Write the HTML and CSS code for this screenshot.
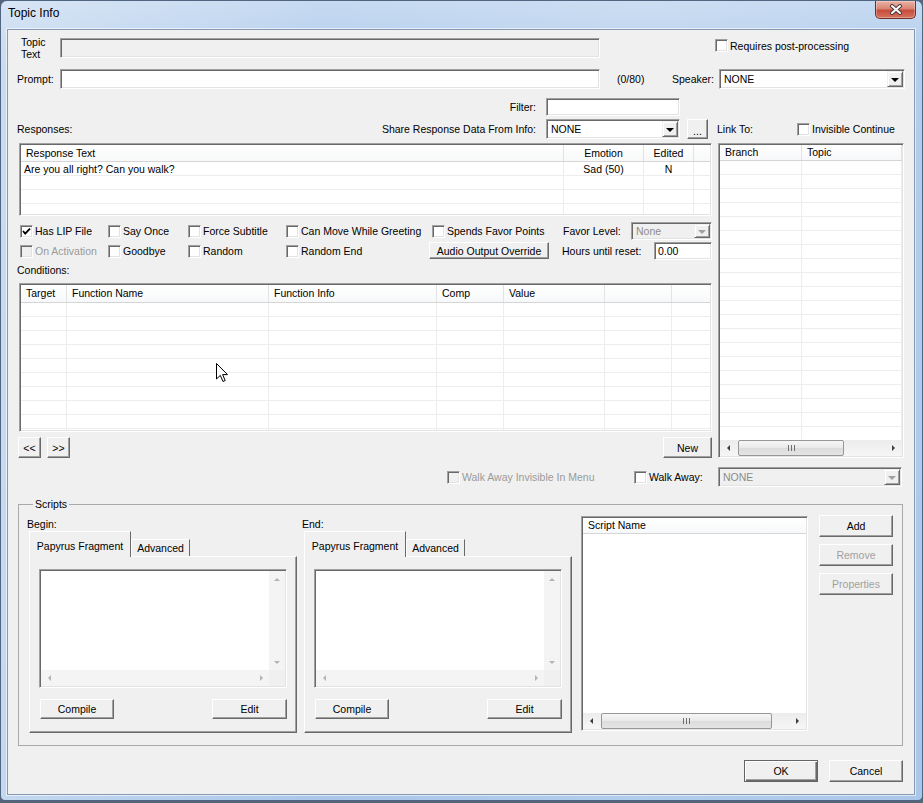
FILE: index.html
```html
<!DOCTYPE html>
<html lang="en">
<head>
  <meta charset="UTF-8" />
  <meta name="viewport" content="width=device-width, initial-scale=1" />
  <title>Topic Info</title>
  <link rel="stylesheet" href="styles.css">
</head>
<body>
  <div class="window">
    <div class="titlebar">
      <span class="title">Topic Info</span>
      <div class="close-btn">
        <svg width="14" height="11" viewBox="0 0 14 11">
          <path d="M3 2 L11 9 M11 2 L3 9" stroke="#4a3a3a" stroke-width="4" stroke-linecap="round"/>
          <path d="M3 2 L11 9 M11 2 L3 9" stroke="#fff" stroke-width="2" stroke-linecap="round"/>
        </svg>
      </div>
    </div>

    <div class="client">
      <!-- Topic text / prompt -->
      <div class="row row-topic">
        <span class="lbl-topic">Topic<br>Text</span>
        <div class="field sunken field-wide disabled"></div>
        <label class="check check-post"><span class="box sunken"></span><span>Requires post-processing</span></label>
      </div>

      <div class="row row-prompt">
        <span class="lbl-prompt">Prompt:</span>
        <div class="field sunken field-wide"></div>
        <span class="counter">(0/80)</span>
        <span class="lbl-speaker">Speaker:</span>
        <div class="combo sunken combo-speaker"><span class="combo-text">NONE</span><span class="drop"></span></div>
      </div>

      <div class="row row-filter">
        <span class="lbl-filter">Filter:</span>
        <div class="field sunken field-filter"></div>
      </div>

      <div class="row row-share">
        <div class="share-lbls"><span>Responses:</span><span>Share Response Data From Info:</span></div>
        <div class="combo sunken combo-share"><span class="combo-text">NONE</span><span class="drop"></span></div>
        <div class="btn btn-more">...</div>
        <span class="lbl-link">Link To:</span>
        <label class="check"><span class="box sunken"></span><span>Invisible Continue</span></label>
      </div>

      <!-- Responses, options, conditions + link list -->
      <div class="main">
        <div class="left-col">
          <div class="lv sunken lv-resp">
            <div class="lv-head">
              <span>Response Text</span><span class="c">Emotion</span><span class="c">Edited</span><span></span>
            </div>
            <div class="lv-body">
              <div class="lv-col"><div class="cell">Are you all right? Can you walk?</div></div>
              <div class="lv-col"><div class="cell c">Sad (50)</div></div>
              <div class="lv-col"><div class="cell c">N</div></div>
              <div class="lv-col"></div>
            </div>
          </div>

          <div class="opts opts-1">
            <label class="check opt-a"><span class="box sunken"><svg width="9" height="9" viewBox="0 0 9 9"><path d="M1 4 L3.2 6.6 L8 1.6" fill="none" stroke="#000" stroke-width="1.8"/></svg></span><span>Has LIP File</span></label>
            <label class="check opt-b"><span class="box sunken"></span><span>Say Once</span></label>
            <label class="check opt-c"><span class="box sunken"></span><span>Force Subtitle</span></label>
            <label class="check opt-d"><span class="box sunken"></span><span>Can Move While Greeting</span></label>
            <label class="check opt-e"><span class="box sunken"></span><span>Spends Favor Points</span></label>
            <span class="lbl-favor">Favor Level:</span>
            <div class="combo sunken combo-favor disabled"><span class="combo-text">None</span><span class="drop"></span></div>
          </div>

          <div class="opts opts-2">
            <label class="check opt-a dis"><span class="box sunken"></span><span class="clip">On Activation</span></label>
            <label class="check opt-b"><span class="box sunken"></span><span>Goodbye</span></label>
            <label class="check opt-c"><span class="box sunken"></span><span>Random</span></label>
            <label class="check opt-d2"><span class="box sunken"></span><span>Random End</span></label>
            <div class="btn btn-audio">Audio Output Override</div>
            <span class="lbl-hours">Hours until reset:</span>
            <div class="field sunken field-hours">0.00</div>
          </div>

          <div class="lbl-cond">Conditions:</div>

          <div class="lv sunken lv-cond">
            <div class="lv-head">
              <span>Target</span><span>Function Name</span><span>Function Info</span><span>Comp</span><span>Value</span><span></span><span></span>
            </div>
            <div class="lv-body">
              <div class="lv-col"></div><div class="lv-col"></div><div class="lv-col"></div>
              <div class="lv-col"></div><div class="lv-col"></div><div class="lv-col"></div>
              <div class="lv-col"></div>
            </div>
          </div>

          <div class="nav-row">
            <div class="btn btn-nav btn-prev">&lt;&lt;</div>
            <div class="btn btn-nav">&gt;&gt;</div>
            <div class="btn btn-new">New</div>
          </div>
        </div>

        <div class="lv sunken lv-link">
          <div class="lv-head">
            <span>Branch</span><span>Topic</span><span></span>
          </div>
          <div class="lv-body">
            <div class="lv-col"></div><div class="lv-col"></div><div class="lv-col"></div>
          </div>
          <div class="hscroll">
            <span class="sb-btn"><i class="arr-l"></i></span>
            <span class="thumb thumb-link"><i class="grip"></i></span>
            <span class="sb-track"></span>
            <span class="sb-btn"><i class="arr-r"></i></span>
          </div>
        </div>
      </div>

      <!-- Walk away -->
      <div class="row row-walk">
        <label class="check walk-inv dis"><span class="box sunken"></span><span>Walk Away Invisible In Menu</span></label>
        <label class="check walk-chk"><span class="box sunken"></span><span>Walk Away:</span></label>
        <div class="combo sunken combo-walk disabled"><span class="combo-text">NONE</span><span class="drop"></span></div>
      </div>

      <!-- Scripts -->
      <fieldset class="group">
        <legend>Scripts</legend>

        <div class="script-col">
          <div class="col-lbl">Begin:</div>
          <div class="tabs">
            <div class="tab active">Papyrus Fragment</div>
            <div class="tab">Advanced</div>
          </div>
          <div class="tab-panel">
            <div class="code-edit sunken">
              <div class="code-text"></div>
              <div class="vscroll"><span class="sb-sq"><i class="arr-u"></i></span><span class="sb-sq"><i class="arr-d"></i></span></div>
              <div class="hscroll-dis"><span class="sb-sq"><i class="arr-l dim"></i></span><span class="sb-sq"><i class="arr-r dim"></i></span></div>
              <div class="sb-corner"></div>
            </div>
            <div class="panel-btns">
              <div class="btn btn-compile">Compile</div>
              <div class="btn btn-edit">Edit</div>
            </div>
          </div>
        </div>

        <div class="script-col">
          <div class="col-lbl">End:</div>
          <div class="tabs">
            <div class="tab active">Papyrus Fragment</div>
            <div class="tab">Advanced</div>
          </div>
          <div class="tab-panel">
            <div class="code-edit sunken">
              <div class="code-text"></div>
              <div class="vscroll"><span class="sb-sq"><i class="arr-u"></i></span><span class="sb-sq"><i class="arr-d"></i></span></div>
              <div class="hscroll-dis"><span class="sb-sq"><i class="arr-l dim"></i></span><span class="sb-sq"><i class="arr-r dim"></i></span></div>
              <div class="sb-corner"></div>
            </div>
            <div class="panel-btns">
              <div class="btn btn-compile">Compile</div>
              <div class="btn btn-edit">Edit</div>
            </div>
          </div>
        </div>

        <div class="lv sunken lv-script">
          <div class="lv-head"><span>Script Name</span></div>
          <div class="lv-body"></div>
          <div class="hscroll">
            <span class="sb-btn"><i class="arr-l"></i></span>
            <span class="thumb thumb-script"><i class="grip"></i></span>
            <span class="sb-track"></span>
            <span class="sb-btn"><i class="arr-r"></i></span>
          </div>
        </div>

        <div class="side-btns">
          <div class="btn btn-side">Add</div>
          <div class="btn btn-side dis">Remove</div>
          <div class="btn btn-side dis">Properties</div>
        </div>
      </fieldset>

      <div class="footer">
        <div class="btn btn-dlg default">OK</div>
        <div class="btn btn-dlg">Cancel</div>
      </div>
    </div>

    <svg class="cursor" width="12" height="19" viewBox="0 0 12 19">
      <path d="M0.5 0.5 V16 L4.3 12.4 L7 18.5 L9.2 17.5 L6.6 11.6 H11.5 Z" fill="#fff" stroke="#000" stroke-width="1"/>
    </svg>
  </div>
</body>
</html>
```

FILE: styles.css
```css
* {
  box-sizing: border-box;
}

body {
  margin: 0;
  background: #56657a;
  font-family: "Liberation Sans", Arial, sans-serif;
  font-size: 10.5px;
  color: #000;
}

/* window frame */

.window {
  position: relative;
  width: 923px;
  height: 801px;
  border: 1px solid #506580;
  border-radius: 7px 7px 5px 5px;
  background:
    linear-gradient(to right, rgba(255, 255, 255, 0.3), rgba(255, 255, 255, 0) 35%, rgba(255, 255, 255, 0.1) 70%, rgba(255, 255, 255, 0)),
    linear-gradient(#c6daf1, #b4cdec 60px, #aac7e9);
  overflow: hidden;
}

.titlebar {
  height: 28px;
  display: flex;
  justify-content: space-between;
  align-items: flex-start;
  padding-left: 7px;
}

.title {
  font-size: 12px;
  line-height: 24px;
}

.close-btn {
  width: 41px;
  height: 18px;
  margin-right: 6px;
  border: 1px solid #6e3028;
  border-top: none;
  border-radius: 0 0 5px 5px;
  background: linear-gradient(#eab2a4, #da8574 45%, #c64c3b 55%, #d8735f);
  box-shadow: inset 0 0 0 1px rgba(255, 255, 255, 0.3);
  display: flex;
  align-items: center;
  justify-content: center;
}

.client {
  margin: 0 7px 0 6px;
  height: 766px;
  background: #f0f0f0;
  border: 1px solid #8599b2;
  box-shadow: 0 0 0 1px rgba(255, 255, 255, 0.6);
}

.cursor {
  position: absolute;
  left: 215px;
  top: 362px;
}

/* common controls */

.sunken {
  border: 1px solid;
  border-color: #a0a0a0 #fff #fff #a0a0a0;
  box-shadow: inset 1px 1px 0 #696969, inset -1px -1px 0 #e3e3e3;
  padding: 1px;
}

.field {
  background: #fff;
  line-height: 14px;
  padding-left: 4px;
}

.field.disabled {
  background: #f0f0f0;
}

.btn {
  background: #f0f0f0;
  border: 1px solid;
  border-color: #fff #696969 #696969 #fff;
  box-shadow: inset -1px -1px 0 #a0a0a0;
  display: flex;
  align-items: center;
  justify-content: center;
  white-space: nowrap;
}

.btn.dis {
  color: #a0a0a0;
}

.btn.default {
  border-color: #646464;
  box-shadow: inset 1px 1px 0 #fff, inset -1px -1px 0 #696969, inset -2px -2px 0 #a0a0a0;
}

.combo {
  display: flex;
  background: #fff;
}

.combo-text {
  flex: 1;
  padding-left: 3px;
  display: flex;
  align-items: center;
}

.combo.disabled {
  background: #f0f0f0;
  color: #8c8c8c;
}

.drop {
  width: 16px;
  background: #f0f0f0;
  border: 1px solid;
  border-color: #f0f0f0 #696969 #696969 #f0f0f0;
  box-shadow: inset 1px 1px 0 #fff, inset -1px -1px 0 #a0a0a0;
  display: flex;
  align-items: center;
  justify-content: center;
}

.drop::after {
  content: "";
  border-left: 4px solid transparent;
  border-right: 4px solid transparent;
  border-top: 4px solid #000;
  margin-top: 1px;
}

.combo.disabled .drop::after {
  border-top-color: #a0a0a0;
}

.check {
  display: flex;
  align-items: center;
  white-space: nowrap;
}

.box {
  width: 13px;
  height: 13px;
  flex: none;
  margin-right: 2px;
  background: #fff;
}

.box svg {
  display: block;
}

.check.dis {
  color: #9a9a9a;
}

.check.dis .box {
  background: #f0f0f0;
}

/* top rows */

.row {
  display: flex;
  align-items: center;
}

.row > * {
  flex: none;
}

.row-topic {
  margin-top: 8px;
  height: 20px;
}

.lbl-topic {
  width: 52px;
  padding-left: 13px;
  line-height: 12px;
}

.field-wide {
  width: 540px;
  height: 20px;
}

.check-post {
  align-self: flex-start;
  margin: 1px 0 0 115px;
}

.row-prompt {
  margin-top: 11px;
  height: 20px;
}

.lbl-prompt {
  width: 52px;
  padding-left: 9px;
}

.counter {
  width: 55px;
  margin-left: 17px;
}

.lbl-speaker {
  width: 47px;
}

.combo-speaker {
  width: 186px;
  height: 20px;
}

.row-filter {
  margin-top: 9px;
  height: 18px;
}

.lbl-filter {
  width: 528px;
  text-align: right;
}

.field-filter {
  width: 134px;
  height: 18px;
  margin-left: 10px;
}

.row-share {
  margin-top: 3px;
  height: 20px;
}

.share-lbls {
  width: 528px;
  padding-left: 9px;
  display: flex;
  justify-content: space-between;
}

.combo-share {
  width: 134px;
  height: 20px;
  margin-left: 10px;
}

.btn-more {
  width: 21px;
  height: 20px;
  margin-left: 7px;
  padding-top: 3px;
}

.lbl-link {
  width: 80px;
  margin-left: 9px;
}

/* main area */

.main {
  display: flex;
  gap: 6px;
  height: 315px;
  margin-top: 4px;
  padding-left: 11px;
}

.left-col {
  width: 693px;
  display: flex;
  flex-direction: column;
}

.lv {
  display: flex;
  flex-direction: column;
  background: #fff;
  overflow: hidden;
  flex: none;
}

.lv-head {
  display: grid;
  grid-template-columns: var(--cols);
  height: 17px;
  line-height: 16px;
  background: linear-gradient(#fff, #f7f8f9);
  border-bottom: 1px solid #d5d5d5;
  flex: none;
}

.lv-head span {
  padding: 0 5px;
  border-right: 1px solid #e3e3e3;
  white-space: nowrap;
  overflow: hidden;
}

.lv-head span:last-child {
  border-right: none;
}

.lv-body {
  flex: 1;
  display: grid;
  grid-template-columns: var(--cols);
  background: repeating-linear-gradient(#fff 0 13px, #ededed 13px 14px);
}

.lv-col {
  border-right: 1px solid #ededed;
}

.lv-col:last-child {
  border-right: none;
}

.cell {
  height: 14px;
  line-height: 14px;
  padding: 0 3px;
  white-space: nowrap;
  overflow: hidden;
}

.c {
  text-align: center;
}

.lv-resp {
  --cols: 543px 80px 50px 1fr;
  height: 73px;
}

.lv-cond {
  --cols: 46px 202px 168px 67px 101px 67px 1fr;
  height: 149px;
  margin-top: 6px;
}

.lv-cond .lv-head {
  height: 18px;
  line-height: 17px;
}

.lv-link {
  --cols: 82px 100px 1fr;
  width: 186px;
  height: 315px;
}

.lv-link .lv-head {
  height: 16px;
  line-height: 15px;
}

.opts {
  display: flex;
  align-items: center;
  height: 18px;
}

.opts > * {
  flex: none;
}

.opts-1 {
  margin-top: 6px;
}

.opts-2 {
  margin-top: 2px;
}

.opt-a {
  width: 88px;
  margin-left: 1px;
}

.opt-b {
  width: 80px;
}

.opt-c {
  width: 98px;
}

.opt-d {
  width: 146px;
}

.opt-d2 {
  width: 143px;
}

.opt-e {
  width: 131px;
}

.clip {
  width: 63px;
  overflow: hidden;
}

.lbl-favor {
  width: 68px;
}

.combo-favor {
  width: 81px;
  height: 18px;
}

.btn-audio {
  width: 120px;
  height: 17px;
  align-self: flex-start;
}

.lbl-hours {
  width: 92px;
  margin-left: 13px;
}

.field-hours {
  width: 58px;
  height: 18px;
  padding-left: 3px;
}

.lbl-cond {
  margin: 3px 0 0 -2px;
  line-height: 14px;
}

.nav-row {
  display: flex;
  height: 24px;
  margin-top: 5px;
}

.btn-nav {
  width: 23px;
  margin-left: 6px;
}

.btn-prev {
  margin-left: -1px;
}

.btn-new {
  width: 49px;
  margin-left: auto;
}

/* scrollbars */

.hscroll {
  display: flex;
  height: 16px;
  flex: none;
  background: linear-gradient(#ececec, #f6f6f6);
}

.sb-btn {
  width: 17px;
  display: flex;
  align-items: center;
  justify-content: center;
  flex: none;
}

.sb-track {
  flex: 1;
}

.thumb {
  margin-left: 1px;
  border: 1px solid #979797;
  border-radius: 2px;
  background: linear-gradient(#f6f6f6, #e9e9e9 50%, #dcdcdc 51%, #e4e4e4);
  display: flex;
  align-items: center;
  justify-content: center;
  flex: none;
}

.thumb-link {
  width: 106px;
}

.thumb-script {
  width: 171px;
}

.grip {
  width: 7px;
  height: 6px;
  background: repeating-linear-gradient(to right, #6f6f6f 0 1px, transparent 1px 3px);
}

.arr-l,
.arr-r,
.arr-u,
.arr-d {
  width: 0;
  height: 0;
}

.arr-l {
  border-top: 3px solid transparent;
  border-bottom: 3px solid transparent;
  border-right: 3px solid #3c3c3c;
}

.arr-r {
  border-top: 3px solid transparent;
  border-bottom: 3px solid transparent;
  border-left: 3px solid #3c3c3c;
}

.arr-u {
  border-left: 3px solid transparent;
  border-right: 3px solid transparent;
  border-bottom: 3px solid #b4b4b4;
}

.arr-d {
  border-left: 3px solid transparent;
  border-right: 3px solid transparent;
  border-top: 3px solid #b4b4b4;
}

.arr-l.dim {
  border-right-color: #b4b4b4;
}

.arr-r.dim {
  border-left-color: #b4b4b4;
}

/* walk away row */

.row-walk {
  margin-top: 9px;
  height: 20px;
  justify-content: flex-end;
  padding-right: 12px;
}

.walk-inv {
  width: 187px;
}

.walk-chk {
  width: 84px;
}

.combo-walk {
  width: 184px;
  height: 20px;
}

/* scripts group */

.group {
  display: flex;
  align-items: flex-start;
  height: 248px;
  margin: 11px 11px 0 10px;
  padding: 4px 9px 0 8px;
  border: 1px solid #a9a9a9;
  min-width: 0;
}

.group legend {
  margin-left: 6px;
  padding: 0 2px;
  line-height: 13px;
}

.script-col {
  width: 270px;
  display: flex;
  flex-direction: column;
  flex: none;
}

.script-col + .script-col {
  margin-left: 5px;
}

.col-lbl {
  margin-top: 3px;
  line-height: 13px;
}

.tabs {
  display: flex;
  align-items: flex-end;
  height: 26px;
  margin: 0 0 -1px 2px;
  z-index: 1;
}

.tab {
  height: 17px;
  width: 59px;
  margin-bottom: 1px;
  padding-top: 2px;
  line-height: 13px;
  text-align: center;
  background: #f0f0f0;
  border-top: 1px solid #fff;
  border-left: 1px solid #fff;
  border-right: 1px solid #696969;
  white-space: nowrap;
}

.tab.active {
  width: 102px;
  height: 26px;
  margin-bottom: 0;
  padding-top: 8px;
}

.tab-panel {
  width: 268px;
  height: 177px;
  margin-left: 2px;
  padding: 12px 9px 0 9px;
  background: #f0f0f0;
  border: 1px solid;
  border-color: #fff #696969 #696969 #fff;
  box-shadow: inset -1px -1px 0 #a0a0a0;
}

.code-edit {
  height: 119px;
  background: #fff;
  display: grid;
  grid-template-columns: 1fr 16px;
  grid-template-rows: 1fr 16px;
}

.vscroll {
  display: flex;
  flex-direction: column;
  justify-content: space-between;
  background: #f4f4f4;
}

.hscroll-dis {
  display: flex;
  justify-content: space-between;
  background: #f4f4f4;
}

.sb-sq {
  width: 16px;
  height: 16px;
  display: flex;
  align-items: center;
  justify-content: center;
}

.sb-corner {
  background: #f0f0f0;
}

.panel-btns {
  display: flex;
  justify-content: space-between;
  margin-top: 11px;
  padding-left: 1px;
}

.btn-compile {
  width: 74px;
  height: 20px;
}

.btn-edit {
  width: 75px;
  height: 20px;
}

.lv-script {
  --cols: 1fr;
  width: 227px;
  height: 215px;
  margin: 1px 0 0 9px;
}

.lv-script .lv-head {
  height: 16px;
  line-height: 15px;
}

.lv-script .lv-body {
  background: #fff;
}

.side-btns {
  display: flex;
  flex-direction: column;
  gap: 7px;
  margin-left: 11px;
  flex: none;
}

.btn-side {
  width: 74px;
  height: 22px;
}

/* dialog buttons */

.footer {
  display: flex;
  justify-content: flex-end;
  gap: 11px;
  margin-top: 14px;
  padding-right: 11px;
}

.btn-dlg {
  width: 74px;
  height: 22px;
}
```
